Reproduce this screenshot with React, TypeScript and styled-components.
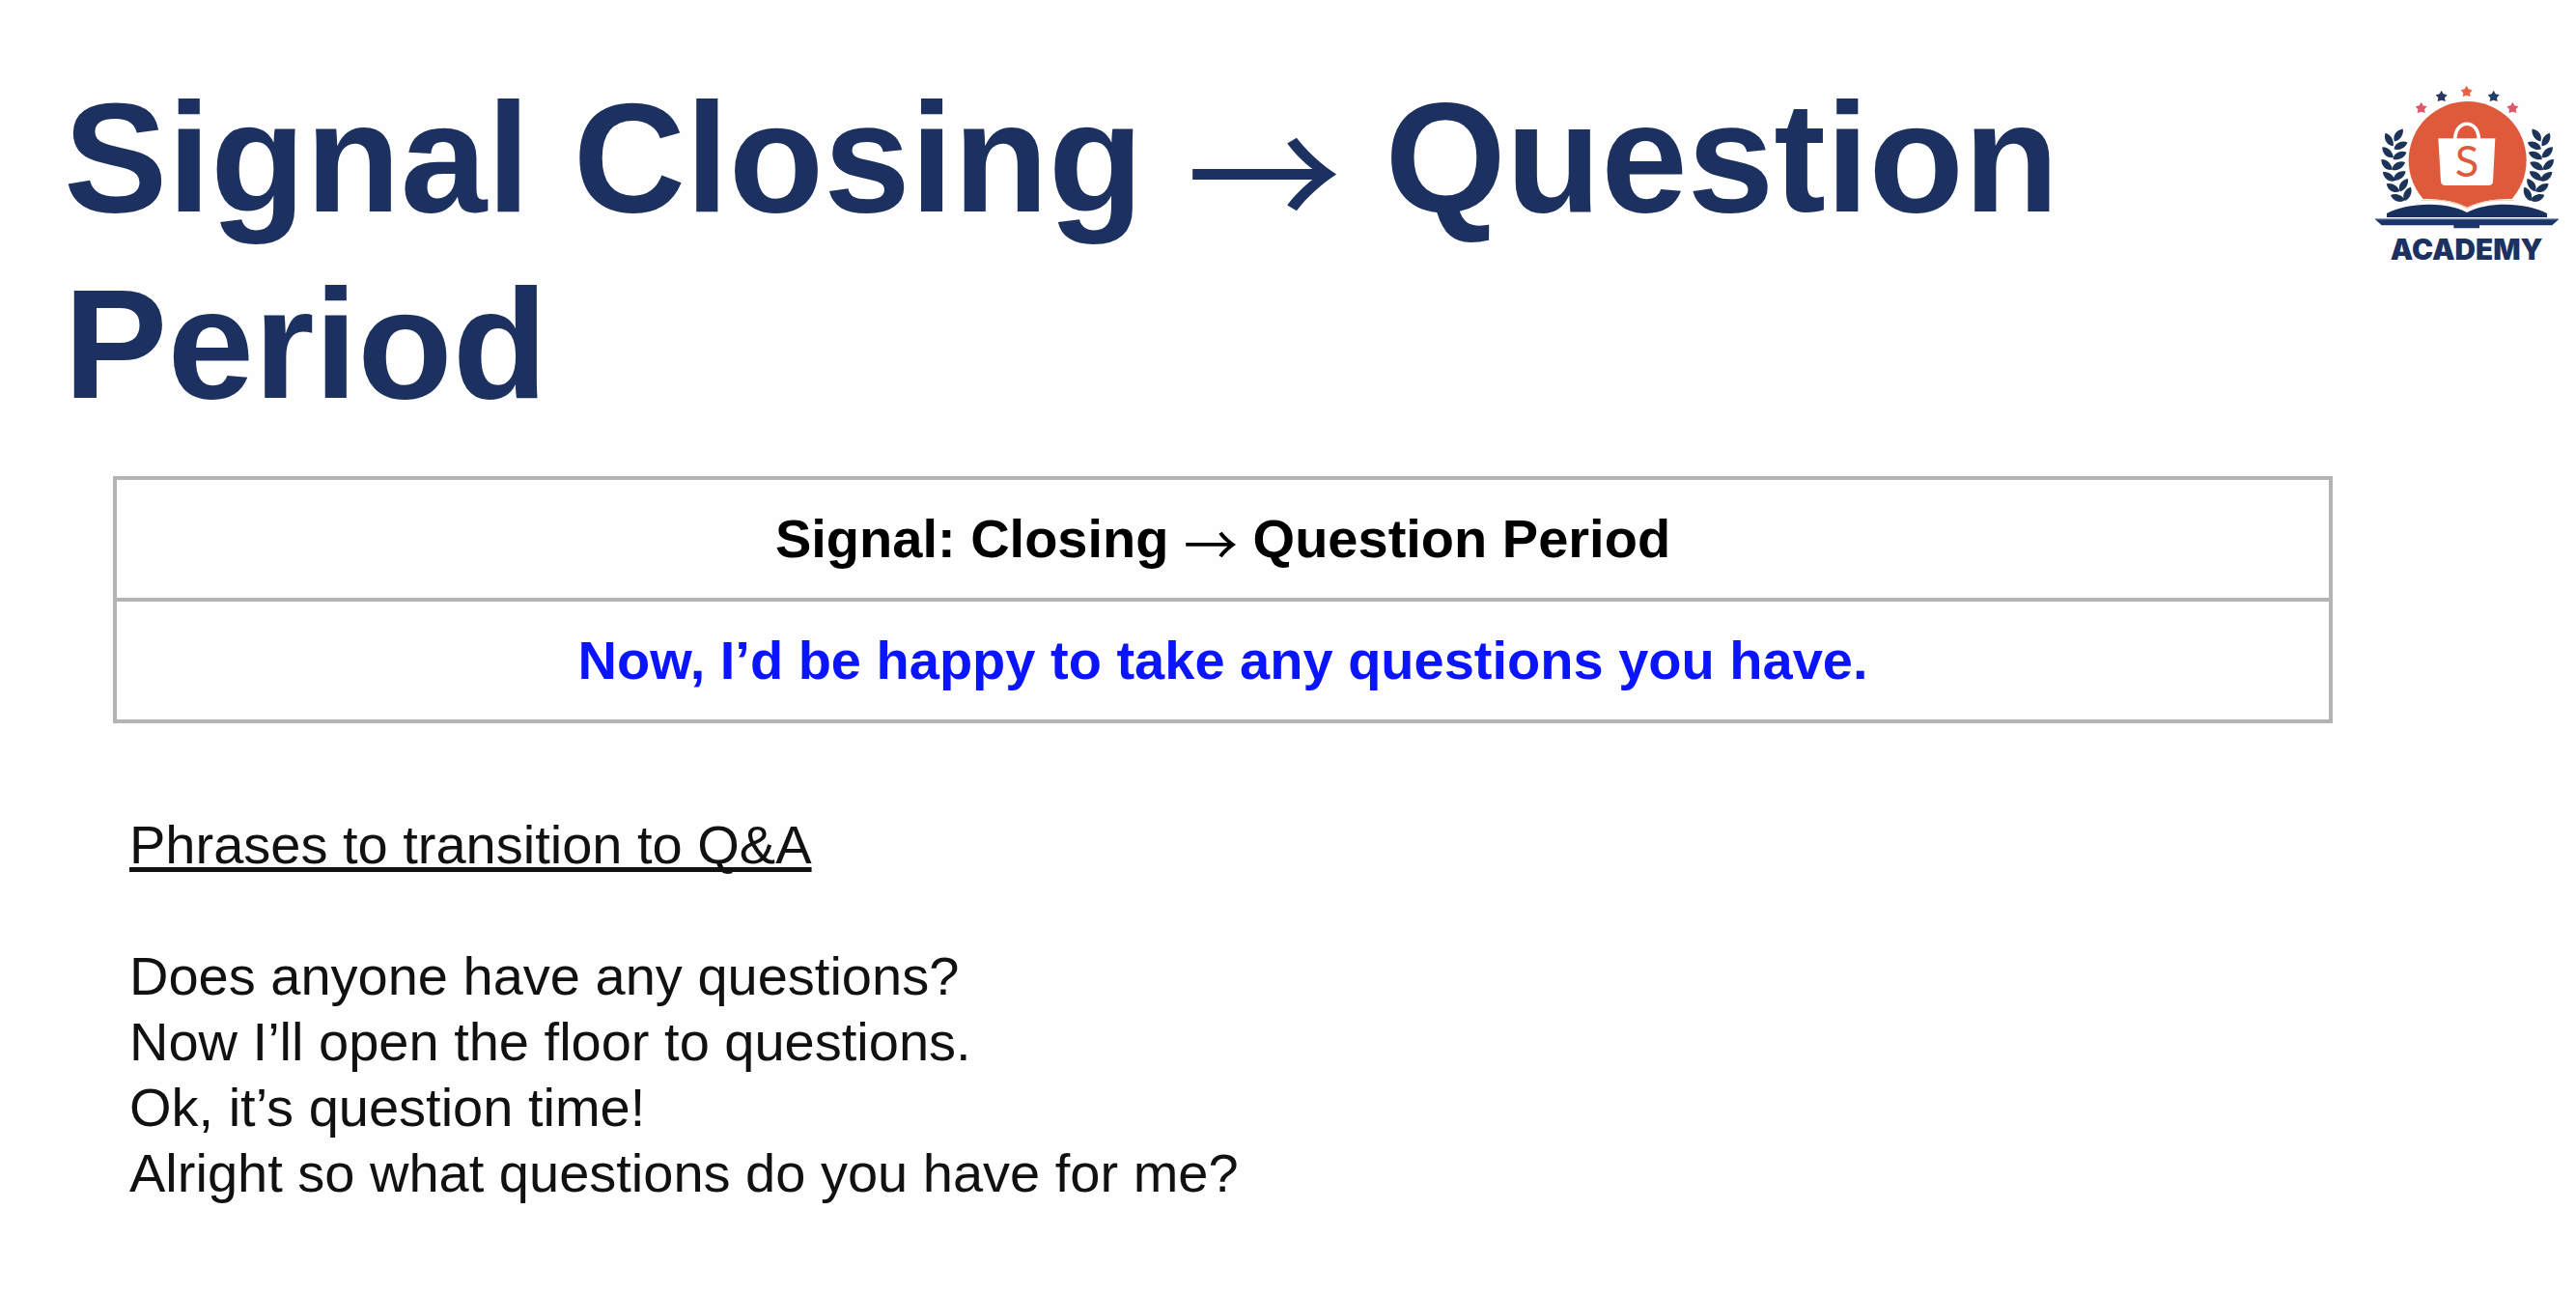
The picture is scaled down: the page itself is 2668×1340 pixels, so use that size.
import React from "react";
import styled, { createGlobalStyle } from "styled-components";

const NAVY = "#1c3160";
const ORANGE = "#df5a3b";

const GlobalStyle = createGlobalStyle`
  body {
    margin: 0;
    background: #fefefe;
    color: #111111;
    font-family: "Liberation Sans", Arial, sans-serif;
  }
`;

const Slide = styled.main`
  display: flex;
  flex-direction: column;
`;

const Header = styled.header`
  display: flex;
  align-items: flex-start;
  justify-content: space-between;
  padding: 67px 0 0 66px;
`;

const Title = styled.h1`
  flex: 1;
  margin: 0;
  color: ${NAVY};
  font-size: 161px;
  line-height: 193px;
  font-weight: 700;
`;

const Arrow = styled.span`
  font-family: "Noto Sans CJK SC", sans-serif;
  font-weight: 400;
  line-height: 0;
  vertical-align: -0.14em;
`;

const Logo = styled.svg`
  flex: none;
  width: 228px;
  height: 220px;
  margin-top: 4px;
`;

const Content = styled.div`
  display: flex;
  flex-direction: column;
  gap: 92px;
  padding: 40px 252px 0 117px;
`;

const SignalTable = styled.table`
  width: 100%;
  border-collapse: collapse;
  font-size: 56px;
  line-height: 64px;
  font-weight: 700;
  text-align: center;
  color: #000000;
`;

const cell = `
  padding: 29px 16px;
  border: 4px solid #b4b4b4;
  font-weight: 700;
`;

const HeadCell = styled.th`
  ${cell}
`;

const PhraseCell = styled.td`
  ${cell}
  color: #0a14ff;
`;

const Phrases = styled.section`
  display: flex;
  flex-direction: column;
  gap: 68px;
  padding-left: 17px;
  font-size: 56px;
  line-height: 68px;
`;

const PhrasesTitle = styled.h2`
  margin: 0;
  font-size: inherit;
  font-weight: 400;
  text-decoration: underline;
  text-decoration-thickness: 5px;
  text-underline-offset: 4px;
  text-decoration-skip-ink: none;
`;

const PhraseList = styled.ul`
  margin: 0;
  padding: 0;
  list-style: none;
`;

const phrases = [
  "Does anyone have any questions?",
  "Now I’ll open the floor to questions.",
  "Ok, it’s question time!",
  "Alright so what questions do you have for me?",
];

const stars = [
  { x: 203, y: 122, fill: "#e2556b" },
  { x: 266, y: 86, fill: "#2b3566" },
  { x: 344, y: 71, fill: "#ec6143" },
  { x: 428, y: 86, fill: "#233c6b" },
  { x: 487, y: 122, fill: "#e2556b" },
];

const leaves = [
  [102, 222, -30],
  [98, 262, -46],
  [95, 300, -46],
  [102, 337, -54],
  [115, 372, -60],
  [130, 403, -70],
  [131, 206, 34],
  [138, 238, 64],
  [135, 269, 64],
  [131, 301, 60],
  [134, 332, 54],
  [147, 361, 32],
  [159, 389, 24],
];

function Laurel() {
  return (
    <g fill="#1d3459">
      {leaves.map(([x, y, angle]) => (
        <path
          key={`${x}-${y}`}
          transform={`translate(${x} ${y}) rotate(${angle})`}
          d="M2-24C14-13 15 9 3 23C-12 15-15-9 2-24Z"
        />
      ))}
    </g>
  );
}

function AcademyLogo() {
  return (
    <Logo viewBox="0 0 684 660" role="img" aria-label="Academy">
      {stars.map((s) => (
        <path
          key={s.x}
          fill={s.fill}
          transform={`translate(${s.x} ${s.y})`}
          d="M0-18L6-7L18-4L10 5L12 16L0 12L-12 16L-10 5L-18-4L-6-7Z"
        />
      ))}
      <circle cx="347" cy="285" r="183" fill={ORANGE} />
      <path
        fill="#fefefe"
        d="M150 408Q280 396 346 431Q412 396 545 408V480H150Z"
      />
      <path
        fill="none"
        stroke="#f6cfc4"
        strokeWidth="4"
        d="M204 410Q288 402 346 434Q404 402 490 410"
      />
      <path d="M308 222C308 155 382 155 382 222" fill="none" stroke="#ffffff" strokeWidth="11" />
      <path
        fill="#ffffff"
        d="M256 217H433L426 350Q425 363 412 363H278Q265 363 264 350Z"
      />
      <text
        x="345"
        y="337"
        textAnchor="middle"
        fill={ORANGE}
        fontFamily="Lato, sans-serif"
        fontSize="136"
      >
        S
      </text>
      <Laurel />
      <g transform="translate(694 0) scale(-1 1)">
        <Laurel />
      </g>
      <path
        fill="#17305f"
        d="M96 462V450C150 420 270 408 345 447C420 408 540 420 594 450V462Z"
      />
      <path fill="#8fa5cb" d="M60 465H630V470H60Z" />
      <path fill="#1c3566" d="M60 469H630L610 487H384V496H304V487H80Z" />
      <text
        x="344"
        y="593"
        textAnchor="middle"
        fill={NAVY}
        fontFamily="Inter, sans-serif"
        fontWeight="900"
        fontSize="89"
      >
        ACADEMY
      </text>
    </Logo>
  );
}

export default function App() {
  return (
    <Slide>
      <GlobalStyle />
      <Header>
        <Title>
          Signal Closing <Arrow>→</Arrow> Question Period
        </Title>
        <AcademyLogo />
      </Header>
      <Content>
        <SignalTable>
          <thead>
            <tr>
              <HeadCell scope="col">
                Signal: Closing <Arrow>→</Arrow> Question Period
              </HeadCell>
            </tr>
          </thead>
          <tbody>
            <tr>
              <PhraseCell>Now, I’d be happy to take any questions you have.</PhraseCell>
            </tr>
          </tbody>
        </SignalTable>
        <Phrases>
          <PhrasesTitle>Phrases to transition to Q&amp;A</PhrasesTitle>
          <PhraseList>
            {phrases.map((phrase) => (
              <li key={phrase}>{phrase}</li>
            ))}
          </PhraseList>
        </Phrases>
      </Content>
    </Slide>
  );
}
